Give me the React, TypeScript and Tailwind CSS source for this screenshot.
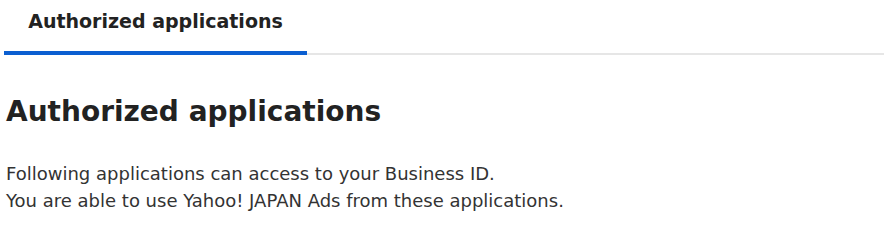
import React from 'react';

const App: React.FC = () => {
  return (
    <div className="w-[884px] h-[228px] bg-white text-[#222] overflow-hidden" style={{ fontFamily: "'DejaVu Sans', 'Noto Sans CJK JP', sans-serif" }}>
      {/* Tabs */}
      <div className="flex items-end border-b-2 border-[#e6e6e6] ml-[4px]">
        <div className="w-[303px] h-[55px] -mb-[2px] pt-[9px] border-b-[4px] border-[#0b5fd1] flex justify-center">
          <span className="text-[19px] font-bold leading-[24px]">Authorized applications</span>
        </div>
      </div>

      {/* Content */}
      <div className="pl-[6px] pt-[37px]">
        <h1 className="text-[28px] font-bold leading-[40px]">Authorized applications</h1>
        <div className="mt-[28px] text-[18px] leading-[27px] text-[#333]">
          <p>Following applications can access to your Business ID.</p>
          <p>You are able to use Yahoo! JAPAN Ads from these applications.</p>
        </div>
      </div>
    </div>
  );
};

export default App;
